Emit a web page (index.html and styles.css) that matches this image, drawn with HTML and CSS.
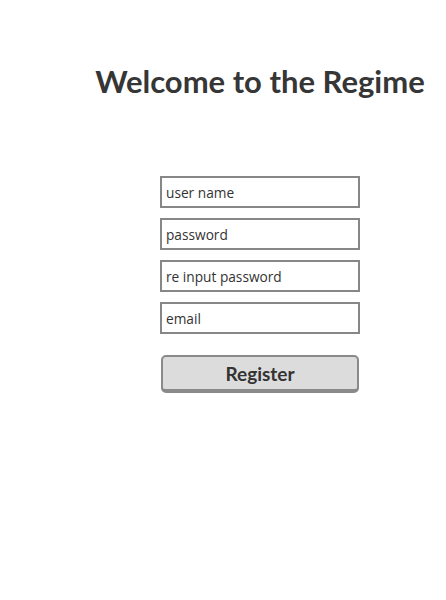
FILE: index.html
```html
<!DOCTYPE html>
<html>
<head>
<meta charset="utf-8">
<link rel="stylesheet" href="styles.css">
</head>
<body>
<main class="page">
  <h1 class="title">Welcome to the Regime</h1>
  <form class="form">
    <input class="field" type="text" placeholder="user name">
    <input class="field" type="password" placeholder="password">
    <input class="field" type="password" placeholder="re input password">
    <input class="field" type="email" placeholder="email">
    <button class="btn" type="button">Register</button>
  </form>
</main>
</body>
</html>
```
FILE: styles.css
```css
html, body {
  margin: 0;
  padding: 0;
  background: #fff;
}
body {
  font-family: "Lato", "Open Sans", sans-serif;
  color: #333;
}
.page {
  margin-left: 74px;
  width: 372px;
  padding-top: 62px;
}
.title {
  margin: 0;
  text-align: center;
  white-space: nowrap;
  font-size: 31px;
  line-height: 38px;
  font-weight: 700;
  color: #363636;
}
.form {
  width: 200px;
  margin: 76px auto 0;
  display: flex;
  flex-direction: column;
  gap: 10px;
}
.field {
  box-sizing: border-box;
  width: 200px;
  height: 32px;
  border: 2px solid #878787;
  border-radius: 0;
  padding: 0 4px;
  font-family: "Open Sans", sans-serif;
  font-size: 13.7px;
  color: #333;
  outline: none;
}
.field::placeholder {
  color: #333;
  opacity: 1;
}
.btn {
  box-sizing: border-box;
  width: 198px;
  height: 38px;
  margin: 11px 0 0 1px;
  border: 2px solid #8a8a8a;
  border-bottom-width: 4px;
  border-radius: 5px;
  background: #dcdcdc;
  font-family: "Lato", "Open Sans", sans-serif;
  font-weight: 700;
  font-size: 19px;
  color: #333;
  padding: 0;
}
```
